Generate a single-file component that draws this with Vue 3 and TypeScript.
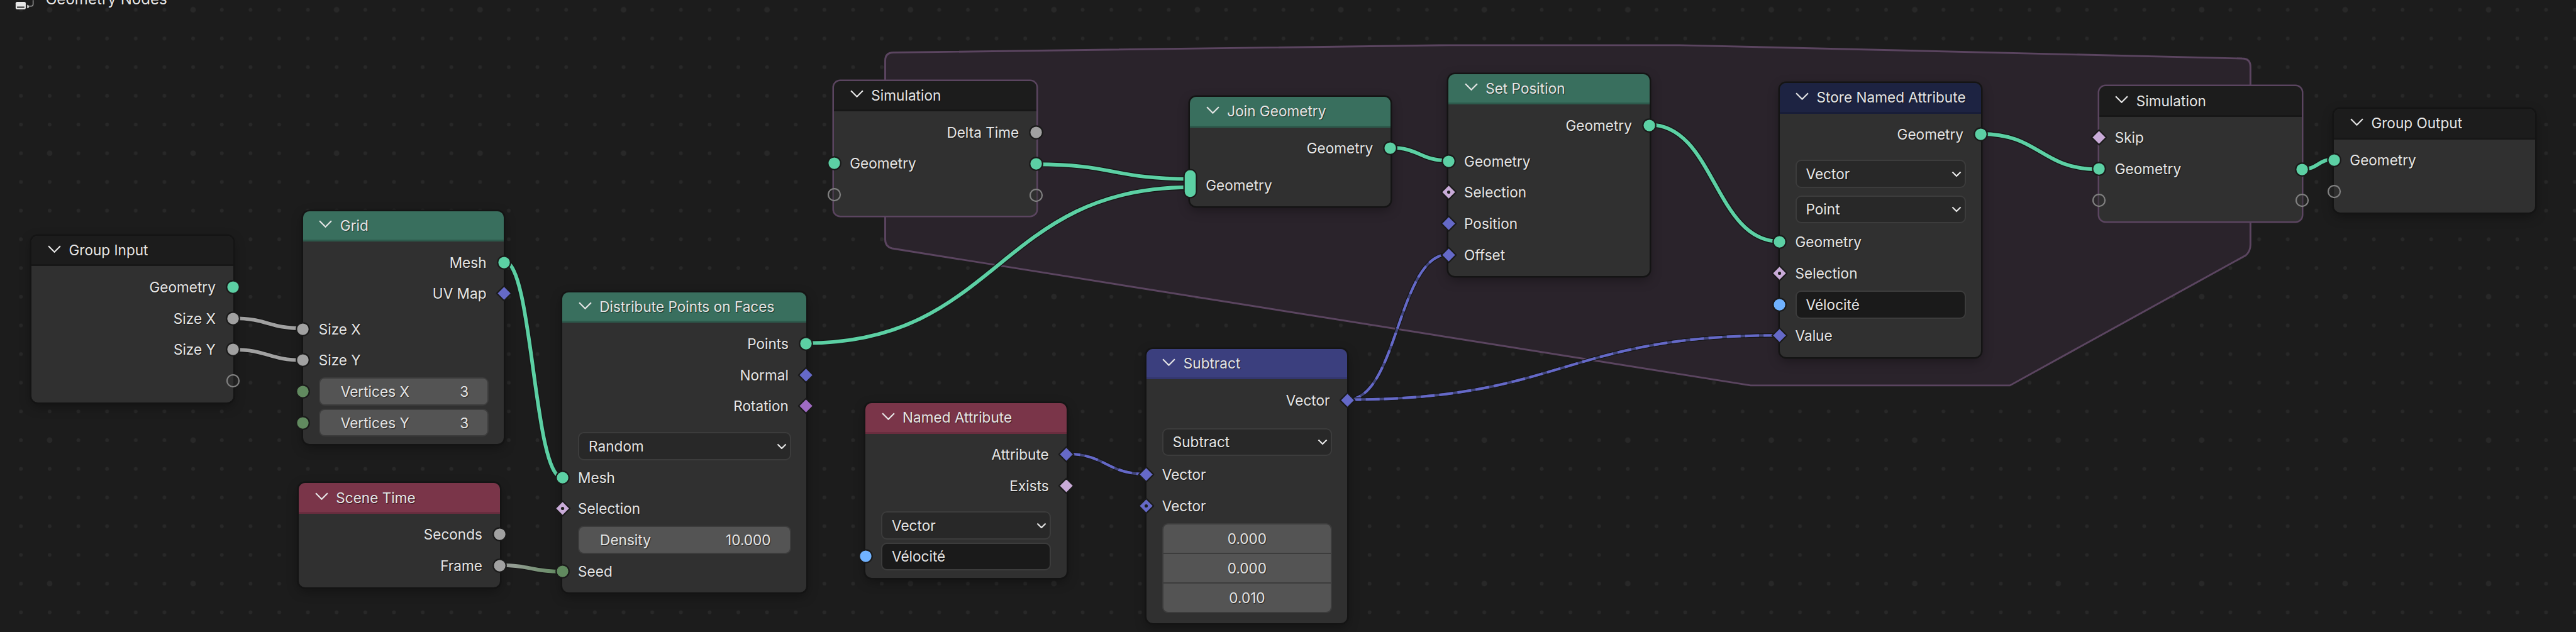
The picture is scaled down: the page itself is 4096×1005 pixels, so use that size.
<script setup lang="ts">
// coordinates below are in reference pixels (5602 wide), scaled down for the 4096 window
const SCALE = 4096 / 5602
const px = (v: number) => `${v * SCALE}px`

type Socket = 'geometry' | 'float' | 'vector' | 'int' | 'bool' | 'rotation' | 'string' | 'empty' | 'multi'
type Row = {
  kind: 'out' | 'in' | 'select' | 'text' | 'number' | 'stack'
  label?: string
  value?: string
  values?: string[]
  socket?: Socket
  dot?: boolean
  gap?: number
}
type GraphNode = { title: string; x: number; y: number; w: number; head: string; zone?: boolean; rows: Row[] }

const COLORS: Record<Socket, string> = {
  geometry: '#5cd0a4',
  float: '#a1a1a1',
  vector: '#6569c8',
  int: '#618a5f',
  bool: '#c9abd8',
  rotation: '#a06bc4',
  string: '#70b2ff',
  empty: 'none',
  multi: '#5cd0a4',
}

const isDiamond = (s: Socket) => s === 'vector' || s === 'bool' || s === 'rotation'

const nodes: GraphNode[] = [
  {
    title: 'Group Input', x: 69, y: 513, w: 438, head: 'dark',
    rows: [
      { kind: 'out', label: 'Geometry', socket: 'geometry' },
      { kind: 'out', label: 'Size X', socket: 'float' },
      { kind: 'out', label: 'Size Y', socket: 'float' },
      { kind: 'out', label: '', socket: 'empty' },
    ],
  },
  {
    title: 'Grid', x: 659, y: 459, w: 437, head: 'green',
    rows: [
      { kind: 'out', label: 'Mesh', socket: 'geometry' },
      { kind: 'out', label: 'UV Map', socket: 'vector' },
      { kind: 'in', label: 'Size X', socket: 'float', gap: 9 },
      { kind: 'in', label: 'Size Y', socket: 'float' },
      { kind: 'number', label: 'Vertices X', value: '3', socket: 'int' },
      { kind: 'number', label: 'Vertices Y', value: '3', socket: 'int' },
    ],
  },
  {
    title: 'Scene Time', x: 650, y: 1051, w: 437, head: 'red',
    rows: [
      { kind: 'out', label: 'Seconds', socket: 'float' },
      { kind: 'out', label: 'Frame', socket: 'float' },
    ],
  },
  {
    title: 'Distribute Points on Faces', x: 1223, y: 636, w: 530, head: 'green',
    rows: [
      { kind: 'out', label: 'Points', socket: 'geometry' },
      { kind: 'out', label: 'Normal', socket: 'vector' },
      { kind: 'out', label: 'Rotation', socket: 'rotation' },
      { kind: 'select', label: 'Random', gap: 19 },
      { kind: 'in', label: 'Mesh', socket: 'geometry' },
      { kind: 'in', label: 'Selection', socket: 'bool', dot: true },
      { kind: 'number', label: 'Density', value: '10.000', socket: 'float' },
      { kind: 'in', label: 'Seed', socket: 'int' },
    ],
  },
  {
    title: 'Named Attribute', x: 1882, y: 877, w: 437, head: 'red',
    rows: [
      { kind: 'out', label: 'Attribute', socket: 'vector' },
      { kind: 'out', label: 'Exists', socket: 'bool' },
      { kind: 'select', label: 'Vector', gap: 18 },
      { kind: 'text', label: 'Vélocité', socket: 'string' },
    ],
  },
  {
    title: 'Simulation', x: 1814, y: 176, w: 440, head: 'dark', zone: true,
    rows: [
      { kind: 'out', label: 'Delta Time', socket: 'float' },
      { kind: 'in', label: 'Geometry', socket: 'geometry' },
      { kind: 'in', label: '', socket: 'empty' },
    ],
  },
  {
    title: 'Join Geometry', x: 2588, y: 211, w: 436, head: 'green',
    rows: [
      { kind: 'out', label: 'Geometry', socket: 'geometry' },
      { kind: 'in', label: 'Geometry', socket: 'multi', gap: 12 },
    ],
  },
  {
    title: 'Subtract', x: 2493, y: 759, w: 437, head: 'blue',
    rows: [
      { kind: 'out', label: 'Vector', socket: 'vector' },
      { kind: 'select', label: 'Subtract', gap: 23 },
      { kind: 'in', label: 'Vector', socket: 'vector', gap: 3 },
      { kind: 'in', label: 'Vector', socket: 'vector', dot: true },
      { kind: 'stack', values: ['0.000', '0.000', '0.010'], gap: 3 },
    ],
  },
  {
    title: 'Set Position', x: 3150, y: 161, w: 437, head: 'green',
    rows: [
      { kind: 'out', label: 'Geometry', socket: 'geometry' },
      { kind: 'in', label: 'Geometry', socket: 'geometry', gap: 10 },
      { kind: 'in', label: 'Selection', socket: 'bool', dot: true },
      { kind: 'in', label: 'Position', socket: 'vector' },
      { kind: 'in', label: 'Offset', socket: 'vector' },
    ],
  },
  {
    title: 'Store Named Attribute', x: 3870, y: 181, w: 438, head: 'navy',
    rows: [
      { kind: 'out', label: 'Geometry', socket: 'geometry' },
      { kind: 'select', label: 'Vector', gap: 18 },
      { kind: 'select', label: 'Point', gap: 9 },
      { kind: 'in', label: 'Geometry', socket: 'geometry', gap: 3 },
      { kind: 'in', label: 'Selection', socket: 'bool', dot: true },
      { kind: 'text', label: 'Vélocité', socket: 'string' },
      { kind: 'in', label: 'Value', socket: 'vector' },
    ],
  },
  {
    title: 'Simulation', x: 4565, y: 188, w: 441, head: 'dark', zone: true,
    rows: [
      { kind: 'in', label: 'Skip', socket: 'bool' },
      { kind: 'in', label: 'Geometry', socket: 'geometry' },
      { kind: 'in', label: '', socket: 'empty' },
    ],
  },
  {
    title: 'Group Output', x: 5076, y: 237, w: 437, head: 'dark',
    rows: [
      { kind: 'in', label: 'Geometry', socket: 'geometry' },
      { kind: 'in', label: '', socket: 'empty' },
    ],
  },
]

// extra sockets on the right edge of the simulation input / left + right of the output
const extras = [
  { node: 5, y: 357 - 176, socket: 'geometry' as Socket, side: 'right' },
  { node: 5, y: 425 - 176, socket: 'empty' as Socket, side: 'right' },
  { node: 10, y: 368 - 188, socket: 'geometry' as Socket, side: 'right' },
  { node: 10, y: 436 - 188, socket: 'empty' as Socket, side: 'right' },
]

type Wire = { from: [number, number]; to: [number, number]; color: string; dashed?: boolean }

const wires: Wire[] = [
  { from: [507, 692], to: [659, 714], color: '#a1a1a1' },
  { from: [507, 760], to: [659, 783], color: '#a1a1a1' },
  { from: [1096, 568], to: [1223, 1038], color: '#5cd0a4' },
  { from: [1087, 1229], to: [1223, 1243], color: 'url(#frameSeed)' },
  { from: [1753, 746], to: [2588, 407], color: '#5cd0a4' },
  { from: [2254, 357], to: [2588, 389], color: '#5cd0a4' },
  { from: [3024, 321], to: [3150, 349], color: '#5cd0a4' },
  { from: [3587, 271], to: [3870, 525], color: '#5cd0a4' },
  { from: [4308, 291], to: [4565, 368], color: '#5cd0a4' },
  { from: [5006, 368], to: [5076, 346], color: '#5cd0a4' },
  { from: [2319, 987], to: [2493, 1031], color: '#6569c8', dashed: true },
  { from: [2930, 869], to: [3150, 553], color: '#6569c8', dashed: true },
  { from: [2930, 869], to: [3870, 729], color: '#6569c8', dashed: true },
]

const wirePath = (w: Wire) => {
  const [x1, y1] = w.from
  const [x2, y2] = w.to
  const h = (x2 - x1) * 0.5
  return `M${x1} ${y1}C${x1 + h} ${y1} ${x2 - h} ${y2} ${x2} ${y2}`
}

const zone =
  'M1925 132Q1925 114 1943 114L3150 98L3653 98L4876 127Q4894 127 4894 145L4894 532Q4894 546 4884 555' +
  'L4371 838L3807 838L1940 540Q1925 536 1925 520Z'

const gridDots: { x: number; y: number; r: number }[] = []
for (let i = 0; i < 5; i++) {
  for (let j = 0; j < 5; j++) {
    gridDots.push({ x: 31.2 + i * 62.4, y: 31.2 + j * 62.4, r: i === 0 && j === 0 ? 6 : 4 })
  }
}
</script>

<template>
  <div class="editor">
    <svg class="backdrop" viewBox="0 0 5602 1374">
      <defs>
        <pattern id="dots" patternUnits="userSpaceOnUse" x="76.8" y="-10.2" width="312" height="312">
          <circle v-for="(d, i) in gridDots" :key="i" :cx="d.x" :cy="d.y" :r="d.r" fill="#282828" />
        </pattern>
        <linearGradient id="frameSeed" gradientUnits="userSpaceOnUse" x1="1087" y1="1229" x2="1223" y2="1243">
          <stop offset="0" stop-color="#a1a1a1" />
          <stop offset="1" stop-color="#618a5f" />
        </linearGradient>
      </defs>
      <rect width="5602" height="1374" fill="url(#dots)" />
      <path :d="zone" fill="#2a232b" stroke="#5b4560" stroke-width="4" />

      <!-- breadcrumb icon, cut off by the top edge -->
      <rect x="34" y="4" width="22" height="16" rx="3" fill="#e6e6e6" />
      <rect x="37" y="14" width="16" height="3" fill="#3a3a3a" />
      <path d="M59 10l4 2v4l-4 2z" fill="#c8c8c8" />
      <path d="M63 13h5q4 0 4-4V0" fill="none" stroke="#a0a0a0" stroke-width="2" />

      <g v-for="(w, i) in wires" :key="i" fill="none">
        <template v-if="w.dashed">
          <path :d="wirePath(w)" stroke="#161616" stroke-width="9" />
          <path :d="wirePath(w)" stroke="#42467c" stroke-width="5.5" />
          <path :d="wirePath(w)" :stroke="w.color" stroke-width="5.5" stroke-dasharray="30 10" />
        </template>
        <template v-else>
          <path :d="wirePath(w)" stroke="#161616" stroke-width="12" />
          <path :d="wirePath(w)" :stroke="w.color" stroke-width="8" />
        </template>
      </g>
    </svg>

    <div class="crumb">Geometry Nodes</div>

    <div
      v-for="(node, n) in nodes"
      :key="n"
      class="node"
      :class="{ 'node--zone': node.zone }"
      :style="{ left: px(node.x), top: px(node.y), width: px(node.w) }"
    >
      <div class="head" :class="`head--${node.head}`">
        <svg class="head-arrow" viewBox="0 0 29 16">
          <path d="M1.5 1.5L14.5 14.5L27.5 1.5" />
        </svg>
        <span>{{ node.title }}</span>
      </div>
      <div class="body">
        <div
          v-for="(row, r) in node.rows"
          :key="r"
          class="row"
          :class="`row--${row.kind}`"
          :style="row.gap ? { marginTop: px(row.gap) } : undefined"
        >
          <svg
            v-if="row.socket"
            class="socket"
            :class="row.kind === 'out' ? 'socket--right' : 'socket--left'"
            viewBox="-24 -24 48 48"
          >
            <path
              v-if="isDiamond(row.socket)"
              d="M0 -16L16 0L0 16L-16 0Z"
              :fill="COLORS[row.socket]"
              stroke="#1a1a1a"
              stroke-width="3"
              stroke-linejoin="round"
            />
            <circle v-if="isDiamond(row.socket) && row.dot" r="3.5" fill="#1c1c1c" />
            <circle
              v-else-if="row.label === 'Density'"
              r="0"
            />
            <circle
              v-else-if="row.socket === 'empty'"
              r="13"
              fill="#303030"
              fill-opacity="0.4"
              stroke="#808080"
              stroke-width="3"
            />
            <rect
              v-else-if="row.socket === 'multi'"
              x="-13.5"
              y="-34"
              width="27"
              height="61"
              rx="13"
              :fill="COLORS.multi"
              stroke="#1a1a1a"
              stroke-width="3"
            />
            <template v-else-if="!isDiamond(row.socket)">
              <path
                v-if="row.label === 'Density'"
                d="M0 -16L16 0L0 16L-16 0Z"
                :fill="COLORS.float"
                stroke="#1a1a1a"
                stroke-width="3"
              />
              <circle v-else r="14" :fill="COLORS[row.socket]" stroke="#1a1a1a" stroke-width="3" />
            </template>
          </svg>

          <span v-if="row.kind === 'out' || row.kind === 'in'" class="label">{{ row.label }}</span>

          <div v-else-if="row.kind === 'select'" class="field field--select">
            <span>{{ row.label }}</span>
            <svg class="select-arrow" viewBox="0 0 22 13"><path d="M2 2L11 11L20 2" /></svg>
          </div>

          <div v-else-if="row.kind === 'text'" class="field field--text">{{ row.label }}</div>

          <div v-else-if="row.kind === 'number'" class="field field--number">
            <span>{{ row.label }}</span>
            <span>{{ row.value }}</span>
          </div>

          <div v-else class="stack">
            <div v-for="(v, k) in row.values" :key="k" class="stack-cell">{{ v }}</div>
          </div>
        </div>
      </div>

      <template v-for="(e, i) in extras" :key="i">
        <svg
          v-if="e.node === n"
          class="socket socket--right socket--free"
          viewBox="-24 -24 48 48"
          :style="{ top: px(e.y) }"
        >
          <circle
            v-if="e.socket === 'empty'"
            r="13"
            fill="#303030"
            fill-opacity="0.4"
            stroke="#808080"
            stroke-width="3"
          />
          <circle v-else r="14" :fill="COLORS[e.socket]" stroke="#1a1a1a" stroke-width="3" />
        </svg>
      </template>
    </div>
  </div>
</template>

<style scoped>
.editor {
  position: relative;
  width: 4096px;
  height: 1005px;
  overflow: hidden;
  background: #1c1c1c;
  color: #e6e6e6;
  font-family: Inter, "Liberation Sans", sans-serif;
  font-size: 22.6px;
  text-shadow: 1px 1px 1px rgba(0, 0, 0, 0.6);
}

.backdrop {
  position: absolute;
  left: 0;
  top: 0;
  width: 4096px;
  height: 1005px;
}

.crumb {
  position: absolute;
  left: 72.4px;
  top: -12.8px;
  font-size: 24.1px;
  line-height: 1;
}

.node {
  position: absolute;
  background: #303030;
  border-radius: 10px;
  box-shadow: 0 0 0 2.5px #141414, 0 6px 18px rgba(0, 0, 0, 0.35);
}

.node--zone {
  box-shadow: 0 0 0 2.5px #5b4560;
}

.head {
  display: flex;
  align-items: center;
  gap: 12.4px;
  height: 48.3px;
  padding-left: 25.6px;
  border-radius: 10px 10px 0 0;
  border-bottom: 3px solid;
  box-sizing: border-box;
}

.head--dark { background: #1c1c1c; border-color: #171717; }
.head--green { background: #396f5e; border-color: #2d5a4c; }
.head--red { background: #7a3549; border-color: #6a2d3f; }
.head--blue { background: #3b3f7e; border-color: #33366e; }
.head--navy { background: #1d2342; border-color: #181d38; }

.head-arrow {
  width: 21px;
  height: 12px;
  flex-shrink: 0;
  margin-top: -4px;
}

.head-arrow path {
  fill: none;
  stroke: #e6e6e6;
  stroke-width: 3;
}

.body {
  padding: 8.4px 0 9px;
}

.row {
  position: relative;
  display: flex;
  align-items: center;
  height: 49.7px;
  padding: 0 24.1px 0 24.9px;
  box-sizing: border-box;
}

.row--out {
  justify-content: flex-end;
  padding-right: 27.8px;
}

.row--stack {
  height: auto;
  margin-bottom: 7px;
}

.label {
  white-space: nowrap;
}

.socket {
  position: absolute;
  top: 50%;
  width: 35.1px;
  height: 35.1px;
  margin-top: -17.55px;
  overflow: visible;
}

.socket--left {
  left: -17.55px;
}

.socket--right {
  right: -17.55px;
}

.socket--free {
  margin-top: -17.55px;
}

.field {
  flex: 1;
  display: flex;
  align-items: center;
  justify-content: space-between;
  height: 44.6px;
  box-sizing: border-box;
  border: 2.5px solid #3c3c3c;
  border-radius: 9px;
  white-space: nowrap;
}

.field--select {
  padding: 0 5px 0 15px;
  background: #282828;
}

.field--text {
  padding: 0 15px;
  background: #1a1a1a;
}

.field--number {
  padding: 0 30px 0 33px;
  background: #545454;
}

.select-arrow {
  width: 16px;
  height: 9.5px;
}

.select-arrow path {
  fill: none;
  stroke: #e6e6e6;
  stroke-width: 3;
}

.stack {
  flex: 1;
  border: 2.5px solid #3c3c3c;
  border-radius: 9px;
  overflow: hidden;
}

.stack-cell {
  display: flex;
  align-items: center;
  justify-content: center;
  height: 45.3px;
  background: #545454;
}

.stack-cell + .stack-cell {
  border-top: 2.5px solid #3c3c3c;
}
</style>

<style>
html,
body {
  margin: 0;
  background: #1c1c1c;
}
</style>
